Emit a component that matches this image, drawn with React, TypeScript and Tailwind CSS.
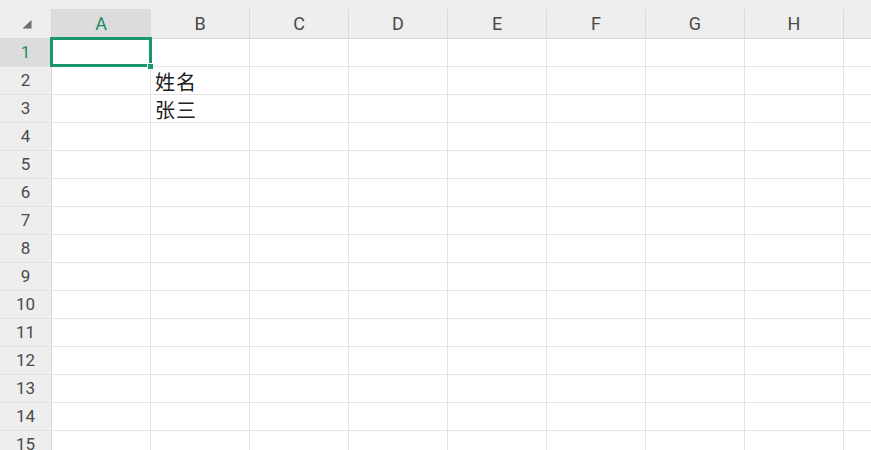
const COLS = ['A', 'B', 'C', 'D', 'E', 'F', 'G', 'H', ''];
const ROWS = Array.from({ length: 15 }, (_, i) => i + 1);

const cells: Record<string, string> = {
  B2: '姓名',
  B3: '张三',
};

const headFont = { fontFamily: 'Roboto, "Noto Sans", sans-serif' };
const cellFont = { fontFamily: '"Noto Sans CJK SC", "Noto Sans", sans-serif' };

export default function App() {
  return (
    <div className="relative h-[450px] w-[871px] overflow-hidden bg-white">
      <div className="h-[9px] bg-[#eeeeee]" />

      {/* column headers */}
      <div className="flex h-[30px] border-b border-[#d6d6d6] bg-[#eeeeee]" style={headFont}>
        <div className="flex w-[52px] shrink-0 items-center justify-center border-r border-[#d6d6d6] pl-[3px] pt-[2px]">
          <svg width="10" height="9" viewBox="0 0 10 9">
            <polygon points="9.5,0 9.5,8.5 0.5,8.5" fill="#6f6f6f" />
          </svg>
        </div>
        {COLS.map((c, i) => (
          <div
            key={i}
            className={
              'flex w-[99px] shrink-0 items-center justify-center border-r border-[#d9d9d9] text-[18px] ' +
              (c === 'A' ? 'bg-[#dcdcdc] text-[#1b8c63]' : 'text-[#4a4a4a]')
            }
          >
            {c}
          </div>
        ))}
      </div>

      {/* rows */}
      {ROWS.map((r) => (
        <div key={r} className="flex h-[28px] border-b border-[#e3e3e3]">
          <div
            className={
              'flex w-[52px] shrink-0 items-center justify-center border-r border-[#d6d6d6] text-[17px] ' +
              (r === 1 ? 'bg-[#dcdcdc] text-[#1b8c63]' : 'bg-[#eeeeee] text-[#4a4a4a]')
            }
            style={headFont}
          >
            {r}
          </div>
          {COLS.map((c, i) => (
            <div
              key={i}
              className="flex w-[99px] shrink-0 items-end whitespace-nowrap border-r border-[#e3e3e3] pb-[2px] pl-[4px] text-[20px] leading-none tracking-[1px] text-[#222]"
              style={cellFont}
            >
              {cells[c + r] ?? ''}
            </div>
          ))}
        </div>
      ))}

      {/* active cell A1 */}
      <div className="absolute left-[50px] top-[37px] h-[30px] w-[102px] border-[3px] border-[#1b9669]" />
      <div className="absolute left-[147px] top-[63px] h-[7px] w-[7px] border border-white bg-[#1b9669]" />
    </div>
  );
}
